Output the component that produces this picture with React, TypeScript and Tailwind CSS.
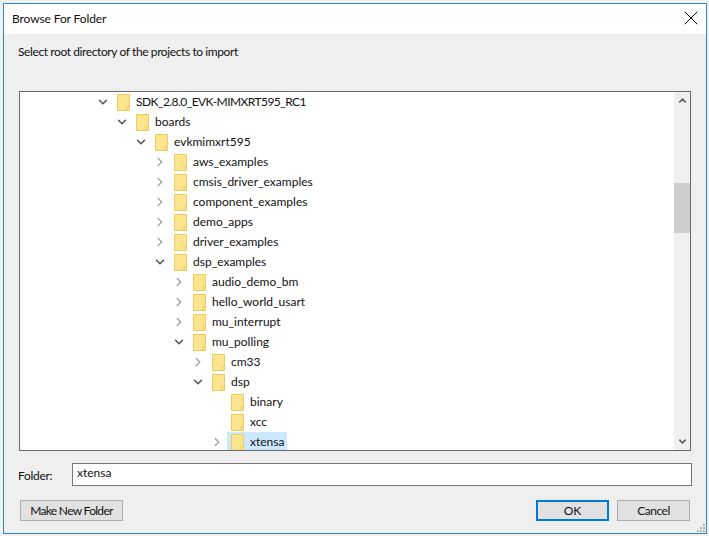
import { X, ChevronRight, ChevronDown, ChevronUp } from 'lucide-react';

type Row = { name: string; level: number; state?: 'open' | 'closed'; selected?: boolean; tight?: boolean };

const rows: Row[] = [
  { name: 'SDK_2.8.0_EVK-MIMXRT595_RC1', level: 0, state: 'open', tight: true },
  { name: 'boards', level: 1, state: 'open' },
  { name: 'evkmimxrt595', level: 2, state: 'open' },
  { name: 'aws_examples', level: 3, state: 'closed' },
  { name: 'cmsis_driver_examples', level: 3, state: 'closed' },
  { name: 'component_examples', level: 3, state: 'closed' },
  { name: 'demo_apps', level: 3, state: 'closed' },
  { name: 'driver_examples', level: 3, state: 'closed' },
  { name: 'dsp_examples', level: 3, state: 'open' },
  { name: 'audio_demo_bm', level: 4, state: 'closed' },
  { name: 'hello_world_usart', level: 4, state: 'closed' },
  { name: 'mu_interrupt', level: 4, state: 'closed' },
  { name: 'mu_polling', level: 4, state: 'open' },
  { name: 'cm33', level: 5, state: 'closed' },
  { name: 'dsp', level: 5, state: 'open' },
  { name: 'binary', level: 6 },
  { name: 'xcc', level: 6 },
  { name: 'xtensa', level: 6, state: 'closed', selected: true },
];

const indents = ['pl-[74px]', 'pl-[93px]', 'pl-[112px]', 'pl-[131px]', 'pl-[150px]', 'pl-[169px]', 'pl-[188px]'];

function Folder() {
  return (
    <svg width="13" height="17" viewBox="0 0 13 17" className="shrink-0">
      <path d="M0.5 0.5H12.5V16.5H0.5Z" fill="#fde48f" stroke="#eccb5f" />
      <path d="M10 16.5V12.5H12.5" fill="none" stroke="#eccb5f" />
    </svg>
  );
}

function Grip() {
  return (
    <svg width="9" height="9" viewBox="0 0 9 9" className="absolute bottom-0 right-0" fill="#b4b4b4">
      <rect x="6" y="0" width="2" height="2" />
      <rect x="3" y="3" width="2" height="2" />
      <rect x="6" y="3" width="2" height="2" />
      <rect x="0" y="6" width="2" height="2" />
      <rect x="3" y="6" width="2" height="2" />
      <rect x="6" y="6" width="2" height="2" />
    </svg>
  );
}

function TreeRow({ row }: { row: Row }) {
  return (
    <div className={`flex h-5 shrink-0 items-center ${indents[row.level]}`}>
      <span className="flex w-[17px] shrink-0 justify-center">
        {row.state === 'open' && <ChevronDown className="h-[14px] w-[14px] text-[#555555]" strokeWidth={2.6} />}
        {row.state === 'closed' && <ChevronRight className="h-[14px] w-[14px] text-[#a6a6a6]" strokeWidth={2.6} />}
      </span>
      <div className={`ml-[2px] flex h-5 items-center pl-[4px] pr-[3px] ${row.selected ? 'bg-[#cce8ff]' : ''}`}>
        <Folder />
        <span className={`ml-[6px] text-xs text-[#111111] ${row.tight ? 'tracking-[-0.55px]' : ''}`}>{row.name}</span>
      </div>
    </div>
  );
}

export default function App() {
  return (
    <div className="h-[536px] w-[709px] overflow-hidden bg-[#f1f1f1] p-[3px] font-['Lato','Liberation_Sans',sans-serif]">
      <div className="relative flex h-[531px] w-[704px] flex-col border border-[#2e86d0] bg-[#efefef]">
        <div className="flex h-[30px] shrink-0 items-center justify-between bg-white pl-2 pr-[3px]">
          <span className="text-xs tracking-[-0.1px] text-[#111111]">Browse For Folder</span>
          <X className="mb-[2px] h-6 w-6 text-black" strokeWidth={1} />
        </div>

        <p className="ml-[14px] mt-[10px] h-[47px] shrink-0 text-xs tracking-[-0.4px] text-[#111111]">Select root directory of the projects to import</p>

        <div className="mx-[15px] flex h-[360px] shrink-0 border border-[#696969] bg-white">
          <div className="flex min-w-0 flex-1 flex-col overflow-hidden">
            {rows.map(row => (
              <TreeRow key={row.name} row={row} />
            ))}
          </div>
          <div className="flex w-[16px] shrink-0 flex-col items-center justify-between bg-[#f0f0f0] py-[3px]">
            <ChevronUp className="h-[11px] w-[11px] text-[#606060]" strokeWidth={3.5} />
            <div className="mb-auto mt-[77px] h-[50px] w-[16px] bg-[#cdcdcd]" />
            <ChevronDown className="h-[11px] w-[11px] text-[#606060]" strokeWidth={3.5} />
          </div>
        </div>

        <div className="ml-[14px] mr-[14px] mt-[12px] flex h-[23px] shrink-0 items-center">
          <span className="mt-[3px] w-[54px] text-xs tracking-[-0.3px] text-[#111111]">Folder:</span>
          <div className="flex h-[23px] flex-1 items-center border border-[#767676] bg-white pb-[3px] pl-[4px] text-xs text-[#111111]">xtensa</div>
        </div>

        <div className="ml-[16px] mr-[16px] mt-[14px] flex shrink-0 justify-between">
          <button className="h-[21px] w-[103px] border border-[#adadad] bg-[#e1e1e1] text-xs tracking-[-0.7px] text-[#111111]">Make New Folder</button>
          <div className="flex gap-2">
            <button className="h-[21px] w-[73px] border-2 border-[#0078d7] bg-[#e1e1e1] text-xs text-[#111111]">OK</button>
            <button className="h-[21px] w-[73px] border border-[#adadad] bg-[#e1e1e1] text-xs tracking-[-0.5px] text-[#111111]">Cancel</button>
          </div>
        </div>
        <Grip />
      </div>
    </div>
  );
}
